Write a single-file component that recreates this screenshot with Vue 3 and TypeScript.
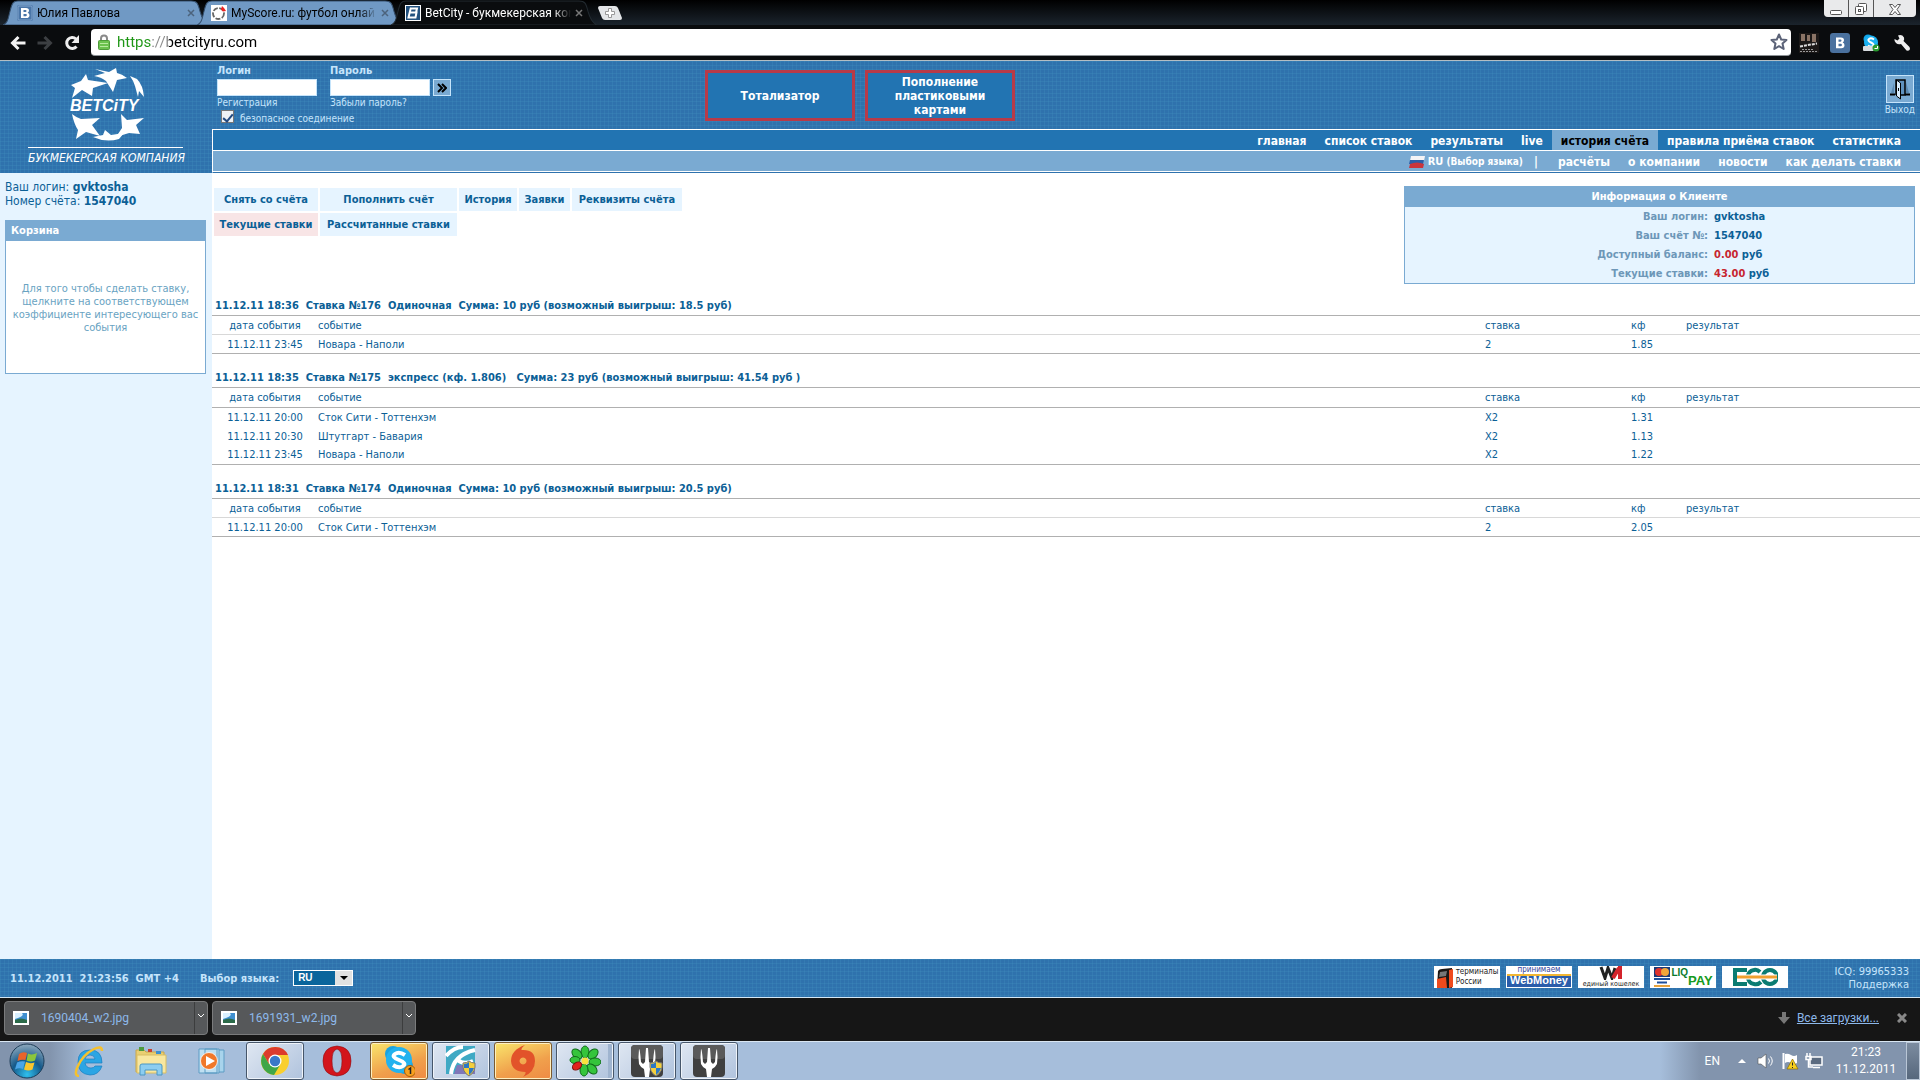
<script setup lang="ts">
import { ref } from 'vue'

interface BetRow { date: string; event: string; pick: string; odds: string }
interface Bet { id: number; time: string; kind: string; total: string; express: boolean; rows: BetRow[] }
interface MenuItem { label: string; active?: boolean }

const tabs = [
  { id: 'vk', title: 'Юлия Павлова', active: false },
  { id: 'score', title: 'MyScore.ru: футбол онлай', active: false },
  { id: 'bet', title: 'BetCity - букмекерская ком', active: true },
]

const mainMenu: MenuItem[] = [
  { label: 'главная' },
  { label: 'список ставок' },
  { label: 'результаты' },
  { label: 'live' },
  { label: 'история счёта', active: true },
  { label: 'правила приёма ставок' },
  { label: 'статистика' },
]
const subMenu = ['расчёты', 'о компании', 'новости', 'как делать ставки']

const accountMenu: MenuItem[] = [
  { label: 'Снять со счёта' },
  { label: 'Пополнить счёт' },
  { label: 'История' },
  { label: 'Заявки' },
  { label: 'Реквизиты счёта' },
  { label: 'Текущие ставки', active: true },
  { label: 'Рассчитанные ставки' },
]

const bets: Bet[] = [
  {
    id: 176, time: '11.12.11 18:36', kind: 'Одиночная', express: false,
    total: 'Сумма: 10 руб (возможный выигрыш: 18.5 руб)',
    rows: [{ date: '11.12.11 23:45', event: 'Новара - Наполи', pick: '2', odds: '1.85' }],
  },
  {
    id: 175, time: '11.12.11 18:35', kind: 'экспресс (кф. 1.806)', express: true,
    total: ' Сумма: 23 руб (возможный выигрыш: 41.54 руб )',
    rows: [
      { date: '11.12.11 20:00', event: 'Сток Сити - Тоттенхэм', pick: 'X2', odds: '1.31' },
      { date: '11.12.11 20:30', event: 'Штутгарт - Бавария', pick: 'X2', odds: '1.13' },
      { date: '11.12.11 23:45', event: 'Новара - Наполи', pick: 'X2', odds: '1.22' },
    ],
  },
  {
    id: 174, time: '11.12.11 18:31', kind: 'Одиночная', express: false,
    total: 'Сумма: 10 руб (возможный выигрыш: 20.5 руб)',
    rows: [{ date: '11.12.11 20:00', event: 'Сток Сити - Тоттенхэм', pick: '2', odds: '2.05' }],
  },
]

const betTitle = (b: Bet): string => [b.time, `Ставка №${b.id}`, b.kind, b.total].join('  ')

const stamp = ['11.12.2011', '21:23:56', 'GMT +4'].join('  ')
const downloads = ['1690404_w2.jpg', '1691931_w2.jpg']

const url = ref('https://betcityru.com')
const login = ref('')
const password = ref('')
const secure = ref(true)
const language = ref('RU')
</script>

<template>
  <div class="screen">
    <header class="browser">
      <div class="tabstrip">
        <button v-for="t in tabs" :key="t.id" type="button" class="tab" :class="{ current: t.active }">
          <svg class="tab-shape" viewBox="0 0 206 24" preserveAspectRatio="none" aria-hidden="true">
            <path d="M0 24C5 22 5 18 7 11C9 3 10 1 15 1H188C194 1 195 3 197 11C199 18 201 22 206 24Z" />
          </svg>
          <svg v-if="t.id === 'vk'" class="fav" viewBox="0 0 16 16" aria-hidden="true">
            <rect width="16" height="16" rx="2" fill="#4a76a8" />
            <rect x="1" y="1" width="14" height="14" rx="1" fill="none" stroke="#83a6cd" />
            <path fill="#fff" fill-rule="evenodd" d="M4 3h5q3 0 3 2.500q0 1.500-1.300 2.200q1.800.6 1.800 2.500q0 2.800-3.300 2.800H4zM6.500 5v2h2q1 0 1-1t-1-1zM6.500 9v2.200h2.300q1.100 0 1.100-1.100T8.800 9z" />
          </svg>
          <svg v-else-if="t.id === 'score'" class="fav" viewBox="0 0 16 16" aria-hidden="true">
            <rect width="16" height="16" fill="#fff" />
            <circle cx="7.500" cy="8.500" r="5.500" fill="none" stroke="#666" stroke-width="1.800" stroke-dasharray="5 1.500" />
            <path fill="#e22" d="M11 1l2 2l2 3l-3 .5l-2-2z" />
          </svg>
          <svg v-else class="fav" viewBox="0 0 16 16" aria-hidden="true">
            <rect x=".5" y=".5" width="15" height="15" fill="#23527f" stroke="#fff" />
            <path fill="none" stroke="#fff" stroke-width="2" d="M5 3.500h7l-1 4H5.200M10.500 7.500h1l-1 5H3.500L5.800 3" />
          </svg>
          <span class="tab-title">{{ t.title }}</span>
          <svg class="tab-close" viewBox="0 0 8 8" aria-hidden="true"><path d="M1 1l6 6M7 1l-6 6" /></svg>
        </button>
        <button type="button" class="newtab" aria-label="Новая вкладка">
          <svg viewBox="0 0 26 16" width="26" height="16" aria-hidden="true">
            <path fill="#e4e6e8" d="M3 1H18Q20 1 21 3L25 13Q25 15 23 15H8Q6 15 5 13L1 3Q1 1 3 1Z" />
            <path fill="#fff" stroke="#999" d="M11.500 3.500h3v3h3v3h-3v3h-3v-3h-3v-3h3z" />
          </svg>
        </button>
        <div class="window-buttons">
          <button type="button" aria-label="Свернуть">
            <svg viewBox="0 0 12 14" width="12" height="14"><rect x=".5" y="8.500" width="11" height="4" rx="1" fill="#fff" stroke="#555" /></svg>
          </button>
          <button type="button" aria-label="Развернуть">
            <svg viewBox="0 0 14 14" width="14" height="14" fill="#fff" stroke="#555"><rect x="4.500" y="1.500" width="8" height="8" rx="1" /><rect x="1.500" y="4.500" width="8" height="8" rx="1" /><rect x="4.500" y="7.500" width="2" height="2" /></svg>
          </button>
          <button type="button" class="close" aria-label="Закрыть">
            <svg viewBox="0 0 12 14" width="12" height="14"><path fill="#fff" stroke="#555" d="M.5 2.500h3L6 5.500l2.500-3h3L8 7.500l3.500 5h-3L6 9.500l-2.500 3h-3L4 7.500z" /></svg>
          </button>
        </div>
      </div>

      <div class="toolbar">
        <button type="button" class="tool" aria-label="Назад"><svg viewBox="0 0 16 16" width="16" height="16"><path fill="none" stroke="#f4f4f4" stroke-width="3" d="M15.500 8H3M8.500 2L2.500 8l6 6" /></svg></button>
        <button type="button" class="tool" aria-label="Вперёд"><svg viewBox="0 0 16 16" width="16" height="16"><path fill="none" stroke="#3c3f42" stroke-width="3" d="M.5 8H13M7.500 2l6 6l-6 6" /></svg></button>
        <button type="button" class="tool" aria-label="Обновить"><svg viewBox="0 0 16 16" width="16" height="16"><path fill="none" stroke="#eee" stroke-width="3" d="M12.500 11.500A5.500 5.500 0 1 1 12 4" /><path fill="#eee" d="M15 0v8H7.500z" /></svg></button>
        <div class="address">
          <svg viewBox="0 0 12 16" width="12" height="16" aria-hidden="true">
            <path fill="none" stroke="#8a8a8a" stroke-width="2" d="M3 8V4.500a3 3 0 0 1 6 0V8" />
            <rect x=".5" y="6.500" width="11" height="9" rx="1" fill="#6cc24e" stroke="#4e9b3a" />
            <path stroke="#b7ea9f" d="M2 9.500h8M2 12.500h8" />
          </svg>
          <input v-model="url" type="text" aria-label="Адрес">
          <svg viewBox="0 0 18 18" width="18" height="18" aria-hidden="true"><path fill="#fff" stroke="#5c6378" stroke-width="2" stroke-linejoin="round" d="M9 1.500l2.200 5l5.300.5l-4 3.500l1.200 5.500L9 13.200L4.300 16l1.200-5.500l-4-3.500l5.300-.5z" /></svg>
        </div>
        <button type="button" class="tool" aria-label="Расширение">
          <svg viewBox="0 0 20 20" width="20" height="20"><rect width="20" height="20" fill="#1b1817" /><path fill="#8a7466" d="M2 1h4v7H2zM8 2h3v6H8zM13 1h4v8h-4z" /><path stroke="#ddd" stroke-width="2" stroke-dasharray="3 1" d="M1 13.500l17-3" /><path stroke="#999" stroke-dasharray="2 1" d="M1 18.500h18M3 16.500h12" /></svg>
        </button>
        <button type="button" class="tool" aria-label="ВКонтакте">
          <svg viewBox="0 0 20 20" width="20" height="20"><rect width="20" height="20" rx="3" fill="#4a719e" /><path fill="#fff" fill-rule="evenodd" d="M6 4.500h5q3 0 3 2.700q0 1.600-1.300 2.300q1.800.6 1.800 2.700q0 3-3.300 3H6zM8.500 6.500v2.200h2q1 0 1-1.100t-1-1.100zM8.500 10.700v2.500h2.300q1.100 0 1.100-1.200t-1.100-1.300z" /></svg>
        </button>
        <button type="button" class="tool" aria-label="Skype">
          <svg viewBox="0 0 18 18" width="18" height="18"><circle cx="6" cy="5" r="4.500" fill="#12a5e8" /><circle cx="12" cy="12" r="4" fill="#12a5e8" /><circle cx="9" cy="8.500" r="7" fill="#19b0f0" /><path fill="none" stroke="#fff" stroke-width="2" d="M12 5.500Q9 3.500 7 5T9 8.500T11 12T6 11.500" /><rect x="1" y="12" width="11" height="5" rx="1" fill="#d8dde0" /><circle cx="14" cy="14" r="3.500" fill="#2a9b2f" /><path stroke="#fff" d="M12.500 14.500h3v-2.500" fill="none" /></svg>
        </button>
        <button type="button" class="tool" aria-label="Настройки">
          <svg viewBox="0 0 18 18" width="18" height="18"><path fill="#eee" d="M1.500 5L4.500 6.500L6.500 4.500L5 1.500Q9 0 11 3.500Q11.500 5.500 10.500 7L16.500 13Q17.500 15 16.500 16T13.500 16.500L8 10Q5 11 3 9Q1 7.500 1.500 5Z" /></svg>
        </button>
      </div>
    </header>

    <header class="site-head weave">
      <a class="logo" href="#" aria-label="BetCity">
        <svg viewBox="0 0 160 100" width="160" height="100">
          <g fill="#fff">
            <path d="M69 1L83 4L90 0L91 5Q96 6 101 10L91 12L87 24L80 13Q75 9 68 8L79 5Z" />
            <path d="M60 6L62 12L82 15L67 20L66 28L56 22L46 30L49 20L45 17L55 13Z" />
            <path d="M104 8L111 11Q117 17 118 29L113 23L112 29L109 18Q107 12 104 8Z" />
            <path d="M46 46Q51 50 55 51L74 50L66 57L74 68L60 64L50 71L52 62Q48 56 46 46Z" />
            <path d="M95 46L101 52L118 50L110 57L114 66L103 65L90 69L96 60Z" />
            <path d="M79 62L85 67L98 65L93 71Q80 75 67 69L77 67Z" />
            <text x="44" y="43" class="logo-word">BETCiTY</text>
          </g>
          <path stroke="#fff" d="M2 79.500h155" />
          <text x="2" y="94" class="logo-sub">БУКМЕКЕРСКАЯ КОМПАНИЯ</text>
        </svg>
      </a>

      <div class="head-main">
        <div class="head-top">
          <form class="login" @submit.prevent>
            <div class="login-fields">
              <div class="field">
                <label for="login">Логин</label>
                <input id="login" v-model="login" type="text">
                <a href="#">Регистрация</a>
              </div>
              <div class="field">
                <label for="password">Пароль</label>
                <div class="pass-row">
                  <input id="password" v-model="password" type="password">
                  <button type="submit" aria-label="Войти">
                    <svg viewBox="0 0 10 10" width="10" height="10"><path fill="none" stroke="#000" stroke-width="2" d="M1 1l4 4l-4 4M5 1l4 4l-4 4" /></svg>
                  </button>
                </div>
                <a href="#">Забыли пароль?</a>
              </div>
            </div>
            <label class="secure"><input v-model="secure" type="checkbox"><span>безопасное соединение</span></label>
          </form>
          <div class="promos">
            <a href="#">Тотализатор</a>
            <a href="#">Пополнение пластиковыми картами</a>
          </div>
          <a class="exit" href="#">
            <span class="exit-icon">
              <svg viewBox="0 0 22 24" width="22" height="24"><path fill="#5a88b0" d="M2 16l3-10v10zM17 5l3 11h-3z" /><path stroke="#000" stroke-width="2" d="M1 17.500h5M16 17.500h5" /><path fill="#5f91bd" stroke="#000" stroke-width="1.500" d="M7 18V3h9v15h-4" /><path fill="#d9ecfb" stroke="#000" d="M7.500 3l4 3v16l-4-3z" /><path stroke="#000" d="M9.500 11v3" /></svg>
            </span>
            Выход
          </a>
        </div>
        <nav class="menu main-menu">
          <a v-for="m in mainMenu" :key="m.label" href="#" :class="{ on: m.active }">{{ m.label }}</a>
        </nav>
        <nav class="menu sub-menu">
          <a class="lang" href="#">
            <svg viewBox="0 0 16 12" width="16" height="12" aria-hidden="true"><path fill="#f4f4f6" d="M2 0h14l-1 5H1z" /><path fill="#2b5ea8" d="M1 4h14l-1 4H0z" /><path fill="#c9343c" d="M1 8q7-3 14 0l-1 4H0z" /></svg>
            <span>RU</span><small>(Выбор языка)</small>
          </a>
          <span class="bar">|</span>
          <a v-for="m in subMenu" :key="m" href="#">{{ m }}</a>
        </nav>
      </div>
    </header>

    <div class="body">
      <aside class="side">
        <p class="who">Ваш логин: <b>gvktosha</b><br>Номер счёта: <b>1547040</b></p>
        <section class="basket">
          <h2>Корзина</h2>
          <p>Для того чтобы сделать ставку, щелкните на соответствующем коэффициенте интересующего вас события</p>
        </section>
      </aside>

      <main class="content">
        <div class="account">
          <nav class="account-menu">
            <a v-for="m in accountMenu" :key="m.label" href="#" :class="{ on: m.active }">{{ m.label }}</a>
          </nav>
          <section class="client">
            <h2>Информация о Клиенте</h2>
            <dl>
              <dt>Ваш логин:</dt><dd>gvktosha</dd>
              <dt>Ваш счёт №:</dt><dd>1547040</dd>
              <dt>Доступный баланс:</dt><dd><em>0.00</em> руб</dd>
              <dt>Текущие ставки:</dt><dd><em>43.00</em> руб</dd>
            </dl>
          </section>
        </div>

        <table v-for="b in bets" :key="b.id" class="bet" :class="{ express: b.express }">
          <caption>{{ betTitle(b) }}</caption>
          <colgroup><col class="c-date"><col><col class="c-pick"><col class="c-odds"><col class="c-result"></colgroup>
          <thead>
            <tr><th class="date">дата события</th><th>событие</th><th>ставка</th><th>кф</th><th>результат</th></tr>
          </thead>
          <tbody>
            <tr v-for="r in b.rows" :key="r.event"><td class="date">{{ r.date }}</td><td>{{ r.event }}</td><td>{{ r.pick }}</td><td>{{ r.odds }}</td><td></td></tr>
          </tbody>
        </table>
      </main>
    </div>

    <footer class="site-foot weave">
      <span class="stamp">{{ stamp }}</span>
      <label for="lang">Выбор языка:</label>
      <span class="select">
        <select id="lang" v-model="language"><option>RU</option><option>EN</option></select>
        <span class="select-arrow"><svg viewBox="0 0 8 4" width="8" height="4"><path d="M0 0h8L4 4z" /></svg></span>
      </span>
      <div class="banners">
        <a href="#" class="banner term">
          <svg viewBox="0 0 18 22" width="18" height="22" aria-hidden="true"><path fill="#1c1715" d="M2 5Q3 3 6 3L16 2V22H1z" /><path fill="#ef4a1c" d="M1 13l9-2l1 11H1zM13 4l4-1v18l-4 1z" /><path fill="#777" d="M4 6l7-1l-1 5l-7 1z" /></svg>
          <span>терминалы<br>России</span>
        </a>
        <a href="#" class="banner wm"><span>принимаем</span><b>WebMoney</b></a>
        <a href="#" class="banner wallet">
          <svg viewBox="0 0 24 14" width="24" height="14" aria-hidden="true"><path fill="none" stroke="#222" stroke-width="3" d="M2 1l4 11l3-10l4 10l3-10" /><path stroke="#d3232b" stroke-width="4" d="M21 0v13M20 2l-6 10" /></svg>
          <span>единый кошелек</span>
        </a>
        <a href="#" class="banner liq">
          <svg viewBox="0 0 18 22" width="18" height="22" aria-hidden="true"><rect x="1" y="1" width="16" height="10" fill="#1b3a78" /><circle cx="6" cy="6" r="4" fill="#e0322c" /><circle cx="12" cy="6" r="4" fill="#f2a53a" /><rect x="1" y="12" width="16" height="9" fill="#fff" /><path fill="#1d4f9c" d="M1 12h16v2H1z" /><path fill="#e8a33c" d="M1 19h16v2H1z" /><path stroke="#1d4f9c" stroke-width="2" d="M4 16.500h10" /></svg>
          <span class="liq-a">LIQ</span><span class="liq-b">PAY</span>
        </a>
        <a href="#" class="banner eco" aria-label="ECO">
          <svg viewBox="0 0 46 20" width="46" height="20"><path fill="none" stroke="#0b7c72" stroke-width="4" d="M15 3H3v14h12M28 5Q25 2 22 3Q16 4 16 10T22 17Q26 18 29 15M38 3a7 7 0 1 1-.1 0z" /><path stroke="#fff" stroke-width="5" d="M5 10h40" /><path stroke="#f0a030" stroke-width="3" d="M5 10h40" /></svg>
        </a>
      </div>
      <div class="support"><a href="#">ICQ: 99965333</a><a href="#">Поддержка</a></div>
    </footer>

    <section class="shelf">
      <div v-for="d in downloads" :key="d" class="download">
        <button type="button" class="file">
          <svg viewBox="0 0 16 14" width="16" height="14" aria-hidden="true"><rect width="16" height="14" fill="#fff" /><rect x="2" y="2" width="12" height="10" fill="#3f8fd0" /><path fill="#d8efff" d="M2 2h7q3 3-7 6z" /><path fill="#2c6b4a" d="M2 9q6-3 12 0v3H2z" /></svg>
          {{ d }}
        </button>
        <button type="button" class="more" aria-label="Действия"><svg viewBox="0 0 6 4" width="6" height="4"><path fill="none" stroke="#fff" d="M0 0l3 3l3-3" /></svg></button>
      </div>
      <a class="all" href="#">
        <svg viewBox="0 0 12 12" width="12" height="12" aria-hidden="true"><path fill="#777" d="M4 0h4v5h4l-6 7l-6-7h4z" /></svg>
        <span>Все загрузки...</span>
      </a>
      <button type="button" class="shelf-close" aria-label="Закрыть"><svg viewBox="0 0 10 10" width="10" height="10"><path stroke="#888" stroke-width="3" d="M1 1l8 8M9 1l-8 8" /></svg></button>
    </section>

    <footer class="taskbar">
      <button type="button" class="task start" aria-label="Пуск">
        <svg viewBox="0 0 36 36" width="36" height="36">
          <defs><radialGradient id="orb" cx=".5" cy=".9" r=".9"><stop offset="0" stop-color="#2fc0ee" /><stop offset=".5" stop-color="#14598a" /><stop offset="1" stop-color="#8fa9bd" /></radialGradient></defs>
          <circle cx="18" cy="18" r="17" fill="url(#orb)" stroke="#1c3c58" />
          <path fill="#e8642a" d="M10 11q4-3 8-1l-1.500 7q-4-1-8 1z" /><path fill="#8cc63c" d="M19 10.500q4 2 9-.5l-2 7.500q-4 2-8.500 0z" />
          <path fill="#4aa5e8" d="M8 19.500q4-2 8-1L14 26q-4-1.500-8 .5z" /><path fill="#f9c62e" d="M17 19q4 2 8.500.5l-2 7q-4 2-8.500 0z" />
        </svg>
      </button>
      <button type="button" class="task flat" aria-label="Internet Explorer">
        <svg viewBox="0 0 32 32" width="32" height="32"><path fill="#2ba5e4" stroke="#1a7ec0" stroke-width=".7" fill-rule="evenodd" d="M17 5q12 0 12 13H12q1 5 6 5q3 0 4-2h7q-3 9-12 9Q5 29 5 17T17 5zM12 14h10q-.5-4-5-4t-5 4z" /><path fill="none" stroke="#f5c12e" stroke-width="2.500" d="M6 31Q1 31 4 23Q9 10 21 4Q29 0 29 6" /></svg>
      </button>
      <button type="button" class="task flat" aria-label="Проводник">
        <svg viewBox="0 0 34 30" width="34" height="30"><path fill="#e9cf72" stroke="#c9a648" d="M2 4h8l2 2h18v20H2z" /><path fill="#4c9b3e" d="M5 1h5v4H5z" /><path fill="#c8402f" d="M14 3h4v3h-4z" /><path fill="#3a8fd0" d="M22 5h5v3h-5z" /><path fill="#f8e7a0" stroke="#d8bd62" d="M3 9h29v18H3z" /><path fill="#8ccdf0" stroke="#4a97c4" d="M6 29V20q0-2 2-2h18q2 0 2 2v9h-5v-5H11v5z" /></svg>
      </button>
      <button type="button" class="task flat" aria-label="Media Player">
        <svg viewBox="0 0 32 28" width="32" height="28"><path fill="#a8d4ec" stroke="#5c9cc4" d="M12 3h15v22H12z" /><path fill="#bfe0f2" stroke="#5c9cc4" d="M8 2h14v24H8zM2 2h18v24H2z" /><circle cx="12" cy="14" r="8.500" fill="#f0782a" stroke="#fff" stroke-width=".8" /><path fill="#fff" d="M9 9l9 5l-9 5z" /></svg>
      </button>
      <button type="button" class="task open" aria-label="Chrome">
        <svg viewBox="0 0 30 30" width="30" height="30"><circle cx="15" cy="15" r="14" fill="#f9cf2e" /><path fill="#dc3b2c" d="M15 1A14 14 0 0 1 28 9H15L9 18L3 8A14 14 0 0 1 15 1Z" /><path fill="#3fa648" d="M3 8A14 14 0 0 0 14 29L20 19L9 18Z" /><circle cx="15" cy="15" r="6.500" fill="#fff" /><circle cx="15" cy="15" r="5.200" fill="#3a78c8" /></svg>
      </button>
      <button type="button" class="task flat" aria-label="Opera">
        <svg viewBox="0 0 30 32" width="30" height="32"><path fill="#d3141b" stroke="#8e0c10" stroke-width=".6" fill-rule="evenodd" d="M15 1q14 1 14 15t-14 15Q1 30 1 16T15 1zM15 4q-5 1-5 12t5 12q5-1 5-12T15 4z" /></svg>
      </button>
      <button type="button" class="task alert" aria-label="Skype">
        <svg viewBox="0 0 32 32" width="32" height="32"><circle cx="10" cy="9" r="8" fill="#1ba3e0" /><circle cx="22" cy="21" r="8" fill="#1ba3e0" /><circle cx="16" cy="15" r="13" fill="#22b2ee" /><path fill="none" stroke="#fff" stroke-width="4" d="M22 10Q16 6 12 9T16 15T20 21T10 20" /><circle cx="27" cy="26" r="5.500" fill="#f7a020" stroke="#a85c08" /><path stroke="#222" stroke-width="1.500" fill="none" d="M25.500 24.500l2-1.500v6" /></svg>
      </button>
      <button type="button" class="task open" aria-label="Приложение">
        <svg viewBox="0 0 32 32" width="32" height="32"><rect x="1" y="1" width="29" height="28" fill="#3fa9c4" /><path fill="#7f77b8" d="M12 20h18v9H9z" /><path fill="none" stroke="#fff" stroke-width="4" d="M1 11Q9 2 18 2M6 29Q8 10 30 5M13 15Q18 20 28 16" /><path fill="#f3cf3c" stroke="#777" d="M18 18q4 0 6-2q2 2 6 2q1 9-6 13q-7-4-6-13z" /><path fill="#2c78c4" d="M19 19q3 0 5-2v6h-5zM24 23h5q-1 4-5 7z" /></svg>
      </button>
      <button type="button" class="task alert" aria-label="Origin">
        <svg viewBox="0 0 28 34" width="28" height="34"><path fill="#e2532a" fill-rule="evenodd" d="M16 1Q12 4 12.500 6Q26 5 26 17Q26 28 14 33Q17 30 16.500 28Q3 28 2 17Q2 6 16 1zM14 13.500a3.500 3.500 0 1 0 .1 0z" /></svg>
      </button>
      <button type="button" class="task open stack" aria-label="ICQ">
        <svg viewBox="0 0 32 32" width="32" height="32"><g fill="#35c43c" stroke="#0f6a18"><ellipse cx="16" cy="7" rx="4" ry="6" /><ellipse cx="24" cy="9" rx="4" ry="6" transform="rotate(45 24 9)" /><ellipse cx="26" cy="17" rx="6" ry="4" /><ellipse cx="23" cy="24" rx="4" ry="6" transform="rotate(-45 23 24)" /><ellipse cx="15" cy="25" rx="4" ry="6" /><ellipse cx="8" cy="9" rx="4" ry="6" transform="rotate(-45 8 9)" /><ellipse cx="6" cy="15" rx="5" ry="3.500" /></g><ellipse cx="8" cy="21" rx="5" ry="3.500" fill="#e0221c" stroke="#7a0c08" transform="rotate(-35 8 21)" /><circle cx="16" cy="16" r="3.500" fill="#fbe23c" /></svg>
      </button>
      <button v-for="n in 2" :key="n" type="button" class="task open" aria-label="Игра">
        <svg viewBox="0 0 32 32" width="32" height="32"><rect width="32" height="32" rx="4" fill="#404040" /><rect width="32" height="14" rx="4" fill="#5a5a5a" /><path fill="#fff" d="M8 4Q9 4 10 17L12 19L14 17L15 3H17L18 17L20 19L22 17Q23 4 24 4Q25 12 24 19Q22 23 19 24L18 32H14L13 24Q10 23 8 19Q7 12 8 4Z" /><g v-if="n === 1"><path fill="#f3cf3c" stroke="#777" d="M19 18q4 0 6-2q2 2 6 2q1 9-6 13q-7-4-6-13z" /><path fill="#2c78c4" d="M20 19q3 0 5-2v6h-5zM25 23h5q-1 4-5 7z" /></g></svg>
      </button>
      <div class="tray">
        <span class="kbd">EN</span>
        <svg class="hidden-icons" viewBox="0 0 8 6" width="8" height="6" aria-hidden="true"><path fill="#fff" d="M4 1l4 4H0z" /></svg>
        <svg viewBox="0 0 18 16" width="18" height="16" aria-hidden="true"><path fill="#fff" stroke="#555" stroke-width=".6" d="M1 5h3l5-4v14l-5-4H1z" /><path fill="none" stroke="#fff" d="M11.500 5.500q2 2.500 0 5M13.500 3.500q3.500 4.500 0 9" /></svg>
        <svg viewBox="0 0 18 18" width="18" height="18" aria-hidden="true"><path stroke="#fff" stroke-width="2" d="M2.500 1v16" /><path fill="#fff" d="M4 2q3-1 6 1t6 0v8q-3 2-6 0t-6 0z" /><path fill="#f7cf1c" stroke="#8a6c00" stroke-width=".7" d="M11.500 7l5.500 10H6z" /><path stroke="#222" d="M11.500 10.500v3M11.500 15v1" /></svg>
        <svg viewBox="0 0 18 16" width="18" height="16" aria-hidden="true"><path fill="#5b6b80" stroke="#fff" stroke-width="1.500" d="M5 4h12v8H5z" /><path stroke="#fff" stroke-width="1.500" fill="none" d="M8 14.500h7M2 0v3M5 0v3M1 3.500h5v3H1zM3.500 7v7H8" /></svg>
        <span class="clock">21:23<br>11.12.2011</span>
        <button type="button" class="desktop" aria-label="Показать рабочий стол"></button>
      </div>
    </footer>
  </div>
</template>

<style>
body { margin: 0; }
</style>

<style scoped>
.screen {
  --ui: Roboto, "Noto Sans", sans-serif;
  --site: "DejaVu Sans Condensed", "DejaVu Sans", sans-serif;
  display: flex;
  flex-direction: column;
  min-height: 100vh;
  background: #fff;
  color: #0b6096;
  font: 11px/13px var(--site);
}
.screen * { box-sizing: border-box; }
a { color: inherit; text-decoration: none; }
button { padding: 0; border: 0; background: none; color: inherit; font: inherit; }
svg { display: block; flex: none; }
h2, p, dl, dd { margin: 0; }

/* browser */
.browser { background: #0a0c0e; border-bottom: 1px solid #b4bec4; font-family: var(--ui); }
.tabstrip { display: flex; height: 25px; padding-left: 3px; background: linear-gradient(#000, #1b242d); }
.tab { position: relative; display: flex; align-items: center; gap: 4px; width: 206px; padding: 0 14px; color: #000; font-size: 12px; line-height: 18px; text-align: left; }
.tab + .tab { margin-left: -12px; }
.tab-shape { position: absolute; inset: 0; width: 100%; height: 100%; fill: #7099c4; stroke: #35506e; }
.current .tab-shape { fill: #0a0c0e; stroke: #222a30; }
.current { color: #fff; }
.fav { position: relative; width: 16px; height: 16px; }
.tab-title { position: relative; flex: 1; overflow: hidden; white-space: nowrap; mask-image: linear-gradient(to right, #000 88%, transparent); }
.tab-close { position: relative; width: 8px; height: 8px; stroke: #4c637c; stroke-width: 1.5; }
.current .tab-close { stroke: #777; }
.newtab { align-self: center; }
.window-buttons { display: flex; gap: 1px; margin: 0 4px auto auto; border-radius: 0 0 4px 4px; overflow: hidden; background: #555; }
.window-buttons button { display: grid; place-items: center; width: 24px; height: 17px; background: #e9eaeb; }
.window-buttons .close { width: 42px; }
.toolbar { display: flex; align-items: center; gap: 11px; height: 35px; padding: 0 8px 0 10px; }
.tool { display: grid; place-items: center; width: 16px; height: 20px; }
.address { flex: 1; display: flex; align-items: center; gap: 7px; height: 27px; padding: 0 3px 0 7px; margin-right: -3px; border-bottom: 1px solid #8d9296; border-radius: 4px; background: #fff; }
.address ~ .tool { width: 20px; }
.address input {
  flex: 1; min-width: 0; padding: 0; border: 0; outline: 0;
  font: 15px/20px var(--ui);
  background: linear-gradient(to right, #1e9615 35px, #888 35px 52px, #000 52px);
  background-clip: text;
  color: transparent;
}

/* site header */
.weave {
  background:
    repeating-linear-gradient(to right, #3f8cbc55 0 1px, transparent 1px 4px),
    repeating-linear-gradient(#3f8cbc55 0 1px, transparent 1px 4px),
    #2f72ad;
}
.site-head { display: flex; color: #c5e4fb; }
.logo { width: 212px; padding: 7px 0 0 26px; }
.logo-word { font: italic bold 16px "Liberation Sans", sans-serif; }
.logo-sub { fill: #fff; font: italic 12px var(--site); }
.head-main { flex: 1; }
.head-top { display: flex; justify-content: space-between; height: 68px; padding: 2px 5px 0; }
.login-fields { display: flex; gap: 13px; }
.field { display: flex; flex-direction: column; font-size: 10px; }
.field label { font-size: 11px; font-weight: bold; line-height: 16px; }
.field input { width: 100px; height: 17px; padding: 0 2px; border: 1px solid #c5e4fb; background: #fff; font: inherit; color: #000; }
.pass-row { display: flex; gap: 3px; }
.pass-row button { display: grid; place-items: center; width: 18px; height: 17px; border: 1px solid #c5e4fb; background: #7aaad2; }
.secure { display: flex; align-items: flex-start; gap: 6px; padding: 1px 0 0 4px; font-size: 10px; line-height: 18px; }
.secure input { appearance: none; display: grid; place-items: center; width: 13px; height: 13px; margin: 0; border: 1px solid #777; background: #eef2f6; }
.secure input:checked::after { content: ""; width: 4px; height: 8px; border: solid #234a80; border-width: 0 2px 2px 0; rotate: 40deg; }
.promos { display: flex; gap: 10px; margin: 7px auto 0 254px; }
.promos a { display: grid; place-items: center; width: 150px; height: 51px; padding: 0 20px; border: 3px solid #b83a48; background: #2274b2; color: #fff; font: bold 12px/14px var(--site); text-align: center; }
.exit { display: flex; flex-direction: column; align-items: center; padding-top: 12px; font-size: 10px; }
.exit-icon { display: grid; place-items: center; width: 28px; height: 28px; border: 1px solid #c5e4fb; background: #7aaad2; }
.menu { display: flex; justify-content: flex-end; align-items: stretch; height: 21px; padding-right: 10px; border-top: 1px solid #fff; border-left: 1px solid #fff; color: #fff; font: bold 12px/22px var(--site); }
.menu a { padding: 0 9px; }
.main-menu { background: #2274b2; }
.main-menu .on { background: #7aaad2; color: #000; }
.sub-menu { height: 23px; border-bottom: 1px solid #2f72ad; background: #7aaad2; box-shadow: inset 0 -1px #fff; }
.menu .lang { display: flex; align-items: center; gap: 3px; padding-right: 11px; font-size: 11px; }
.lang small { font-size: 10px; }
.bar { padding-right: 11px; }

/* page */
.body { flex: 1; display: flex; }
.side { width: 212px; padding: 7px 6px 7px 5px; background: #e6f4ff; }
.who { font-size: 12px; line-height: 14px; }
.basket { margin-top: 12px; border: 1px solid #7aaad2; background: #fff; color: #69a3c2; }
.basket h2 { padding: 0 5px; background: #7aaad2; color: #fff; font-size: 11px; line-height: 20px; }
.basket p { padding: 41px 6px 39px; text-align: center; }
.content { flex: 1; min-width: 0; }
.account { display: flex; justify-content: space-between; align-items: flex-start; padding: 13px 5px 0 2px; }
.account-menu { display: grid; grid-template-columns: 104px 137px 58px 51px 110px; gap: 2px; padding-top: 2px; font-weight: bold; line-height: 22px; text-align: center; }
.account-menu a { padding-top: 1px; background: #e6f4ff; white-space: nowrap; }
.account-menu .on { background: #f8e5e6; }
.account-menu a:nth-child(6) { grid-column: 1; }
.client { width: 511px; border: 1px solid #7aaad2; background: #e6f4ff; }
.client h2 { background: #7aaad2; color: #fff; font-size: 11px; line-height: 20px; text-align: center; }
.client dl { display: grid; grid-template-columns: 303px 1fr; column-gap: 6px; font-weight: bold; line-height: 19px; }
.client dt { color: #6d97b8; text-align: right; }
.client em { color: #c7252f; font-style: normal; }
.bet { width: 100%; margin-top: 14px; border-collapse: collapse; table-layout: fixed; border-bottom: 1px solid #b0b0b0; }
.account + .bet { margin-top: 12px; }
.bet caption { padding: 1px 3px 0; font-weight: bold; line-height: 18px; text-align: left; white-space: pre; }
.bet th, .bet td { height: 19px; padding: 0; font-weight: normal; text-align: left; line-height: 13px; }
.bet thead tr { border-top: 1px solid #b0b0b0; border-bottom: 1px solid #d8d8d8; }
.bet.express thead tr { border-bottom-color: #b0b0b0; }
.bet.express th { height: 20px; }
.bet .date { text-align: center; }
.c-date { width: 106px; }
.c-pick { width: 146px; }
.c-odds { width: 55px; }
.c-result { width: 234px; }

/* site footer */
.site-foot { display: flex; align-items: center; height: 39px; padding: 0 11px 0 10px; border-bottom: 1px solid #d3e7f5; color: #c5e4fb; font-weight: bold; }
.stamp { width: 190px; white-space: pre; }
.select { position: relative; margin-left: 14px; }
.select select { appearance: none; display: block; width: 60px; height: 16px; padding: 0 4px; border: 1px solid #fff; border-radius: 0; background: #0a659c; color: #fff; font: bold 10px/12px "Liberation Sans", sans-serif; }
.select-arrow { position: absolute; top: 1px; right: 1px; display: grid; place-items: center; width: 17px; height: 14px; background: #e2e2e2; pointer-events: none; }
.banners { display: flex; gap: 6px; margin: 0 48px 3px auto; }
.banner { display: flex; align-items: center; justify-content: center; width: 66px; height: 22px; overflow: hidden; background: #fff; color: #222; font: 8px/10px var(--site); }
.term { gap: 2px; }
.wm, .wallet { flex-direction: column; }
.wm { background: linear-gradient(#fff 7px, #f2b632 7px 9px, #2a5caa 9px); line-height: 8px; color: #33459c; border: 1px solid #fff; }
.wm b { color: #fff; font: bold 11px/13px "Liberation Sans", sans-serif; }
.wallet { font-size: 7px; line-height: 8px; white-space: nowrap; }
.liq { color: #0a7a2c; font: bold 10px/14px "Liberation Sans", sans-serif; }
.liq-a { align-self: flex-start; }
.liq-b { align-self: flex-end; font-size: 13px; color: #159a20; }
.support { display: flex; flex-direction: column; align-items: flex-end; width: 73px; font-weight: normal; white-space: nowrap; }

/* downloads */
.shelf { display: flex; align-items: center; gap: 4px; height: 43px; padding: 0 13px 3px 4px; background: #161616; color: #8db8ea; font: 12px/16px var(--ui); }
.download { display: flex; width: 204px; height: 34px; border: 1px solid #7a7b7c; border-radius: 4px; background: #56585a; }
.file { flex: 1; display: flex; align-items: center; gap: 12px; padding-left: 8px; }
.more { display: flex; width: 13px; padding: 12px 3px 0; border-left: 1px solid #3c3d3e; }
.all { display: flex; align-items: center; gap: 7px; margin-left: auto; margin-right: 14px; }
.all span { text-decoration: underline; }

/* taskbar */
.taskbar { display: flex; gap: 4px; height: 39px; padding-left: 5px; border-top: 1px solid #d9e6f2; background: linear-gradient(to right, #8294ad 50px, #a6bedb 90px); color: #fff; font: 12px/17px var(--ui); }
.task { display: grid; place-items: center; width: 58px; height: 38px; border-radius: 3px; }
.start { justify-items: start; width: 51px; padding-left: 4px; }
.open { border: 1px solid #46566a; background: linear-gradient(135deg, #dfe7f2, #b0c3dd); box-shadow: inset 0 0 0 1px #eef3f9; }
.alert { border: 1px solid #7a5a30; background: linear-gradient(160deg, #f9e66c, #f0a04c 60%, #ee8a44); box-shadow: inset 0 0 0 1px #fff0c0; }
.stack { box-shadow: inset 0 0 0 1px #eef3f9, inset -5px 0 #9fb4cf; }
.tray { flex: 1; display: flex; align-items: center; justify-content: flex-end; gap: 6px; background: linear-gradient(to left, #8294ad 220px, #a6bedb 260px); }
.kbd { margin-right: 12px; }
.hidden-icons { margin-right: 5px; }
.clock { width: 74px; margin-right: -3px; text-align: center; }
.desktop { width: 14px; align-self: stretch; border: 1px solid #b9c6d6; background: linear-gradient(#7c8ca0, #56677c); }
</style>
